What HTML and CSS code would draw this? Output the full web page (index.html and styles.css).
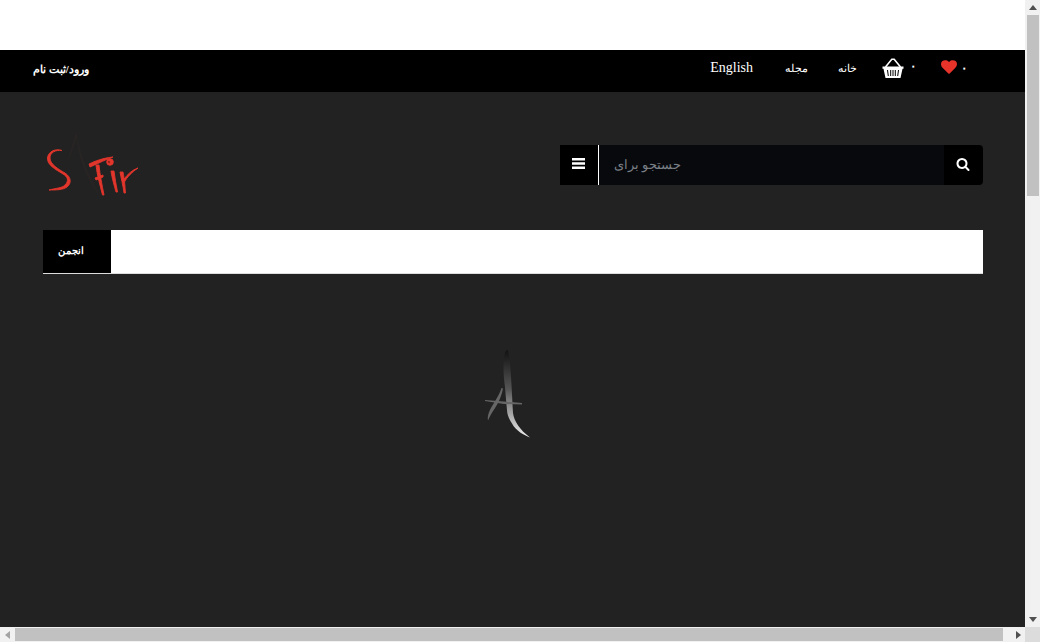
FILE: index.html
```html
<!DOCTYPE html>
<html lang="fa">
<head>
<meta charset="utf-8">
<title>Safir</title>
<link rel="stylesheet" href="styles.css">
</head>
<body>
<div class="window">
  <div class="page">
    <div class="top-strip"></div>
    <nav class="nav">
      <a class="login">ورود/ثبت نام</a>
      <div class="nav-right">
        <a class="lang">English</a>
        <a class="nav-link mag">مجله</a>
        <a class="nav-link home">خانه</a>
        <svg class="basket" viewBox="0 0 22 20">
          <path class="basket-handle" d="M3.500 9 9.800 1.300h2.400L18.500 9"/>
          <path class="basket-fill" d="M0.500 8.500h21v2.200h-1L18.500 20h-15L1.500 10.700h-1z"/>
          <path class="basket-bars" d="M5.500 12l.8 6M8.700 12v6M11 12v6M13.300 12v6M16.500 12l-.8 6"/>
        </svg>
        <span class="count count-basket">۰</span>
        <svg class="heart" viewBox="0 0 1792 1792"><path d="M896 1664q-26 0-44-18l-624-602q-10-8-27.500-26t-55.500-65.500-68-97.500-53.500-121-23.500-138q0-220 127-344t351-124q62 0 126.500 21.500t120 58 95.500 68.500 76 68q36-36 76-68t95.500-68.500 120-58 126.500-21.500q224 0 351 124t127 344q0 221-229 450l-623 600q-18 18-44 18z"/></svg>
        <span class="count">۰</span>
      </div>
    </nav>
    <main class="main">
      <header class="header">
        <svg class="logo" viewBox="0 0 100 80">
          <path class="logo-ghost" d="M33 6C29 20 27 30 22 40L23 40C28 31 31 22 33.500 13 35 30 43 55 55 68L56 68C45 50 37 28 33 6z"/>
          <path class="logo-ink" d="M19 25.500C12 24.500 7 28 7 33 7 39 15 44 22 48 28 52 29 58 24 62 20 65 13 65 6 65 14 63 19 63 22 60 26 56 25 52 20 49 12 44 4 40 4.500 33 5 27 12 23 19 25.500z"/>
          <path class="logo-ink" d="M46 39C52 36 60 33 70 32 64 34 56 38 47 42z"/>
          <path class="logo-ink" d="M53 40 56 40C57 50 59 60 61 70L59.500 70C57 60 54 50 53 40z"/>
          <path class="logo-ink" d="M52 53 60 50 60 52 53 55z"/>
          <circle class="logo-ink" cx="67" cy="37" r="3.300"/>
          <circle class="logo-spot" cx="66" cy="37" r="0.900"/>
          <path class="logo-ink" d="M68 46 71 46C72 53 73 60 74.500 67L73 67C71 60 69 53 68 46z"/>
          <path class="logo-ink" d="M77 47 80 47C80.500 50 81 52 81 54 85 49 89 45 95 43 89 47 84 52 81.500 57 82 60 82 64 82.500 68L81 68C80 60 78 53 77 47z"/>
        </svg>
        <div class="search">
          <div class="search-menu">
            <svg class="bars" viewBox="0 0 13 11"><path d="M0 0h13v2.400H0zM0 4.300h13v2.400H0zM0 8.600h13V11H0z"/></svg>
          </div>
          <div class="search-field">جستجو برای</div>
          <div class="search-btn">
            <svg class="magnifier" viewBox="0 0 1792 1792"><path d="M1216 832q0-185-131.500-316.500t-316.500-131.500-316.500 131.500-131.500 316.500 131.500 316.500 316.500 131.500 316.500-131.500 131.500-316.500zm512 832q0 52-38 90t-90 38q-54 0-90-38l-343-342q-179 124-399 124-143 0-273.500-55.500t-225-150-150-225-55.500-273.500 55.500-273.500 150-225 225-150 273.500-55.500 273.500 55.500 225 150 150 225 55.500 273.500q0 220-124 399l343 343q37 37 37 90z"/></svg>
          </div>
        </div>
      </header>
      <div class="menu-bar">
        <a class="menu-item">انجمن</a>
      </div>
      <div class="loader">
        <svg class="loader-mark" viewBox="0 0 50 90">
          <defs>
            <linearGradient id="steel" x1="0" y1="0" x2="0" y2="1">
              <stop offset="0" stop-color="#111"/>
              <stop offset="0.45" stop-color="#555"/>
              <stop offset="0.62" stop-color="#888"/>
              <stop offset="1" stop-color="#eee"/>
            </linearGradient>
          </defs>
          <path class="mark" d="M25 .5C27 2 28 12 28.500 21 29.500 33 30 45 31 64 32 72 38 81 48 88.500 42 86 34 82 30 74.500 27 70 25 65 25 61 24 50 23 38 23 38 21 25 21 10 23 3.500z"/>
          <path class="mark-side" d="M21 39.500C20 45 18 50 16 54 12 61 8 66 6 71.500 5 66 8 60 12 54 15 49 18 44 19.500 39z"/>
          <path class="mark-side" d="M3 51 40 54 40 55.500 22 55 3 52z"/>
        </svg>
      </div>
    </main>
  </div>
  <div class="vscroll">
    <span class="arrow arrow-up"></span>
    <div class="vtrack"><div class="vthumb"></div></div>
    <span class="arrow arrow-down"></span>
  </div>
  <div class="hscroll">
    <span class="arrow arrow-left"></span>
    <div class="htrack"><div class="hthumb"></div></div>
    <span class="arrow arrow-right"></span>
  </div>
  <div class="corner"></div>
</div>
</body>
</html>
```

FILE: styles.css
```css
* { box-sizing: border-box; }
html, body { margin: 0; height: 100%; overflow: hidden; }
body { font-family: "Liberation Serif", serif; background: #fff; }

.window {
  display: grid;
  grid-template-columns: 1025px 15px;
  grid-template-rows: 627px 15px;
  width: 1040px;
  height: 642px;
}
.page { display: flex; flex-direction: column; overflow: hidden; }
.top-strip { height: 50px; background: #fff; }

.nav {
  height: 42px;
  background: #000;
  color: #fff;
  display: flex;
  align-items: center;
  justify-content: space-between;
  padding: 0 58px 0 33px;
}
.login { font-size: 10.500px; font-weight: bold; padding-bottom: 5px; }
.nav-right { display: flex; align-items: center; padding-bottom: 6px; }
.lang { font-size: 14px; margin-right: 32px; }
.nav-link { font-size: 11px; }
.mag { margin-right: 30px; }
.home { margin-right: 25px; }
.basket { width: 22px; height: 20px; margin-bottom: 1px; }
.basket-handle { fill: none; stroke: #fff; stroke-width: 1.600; }
.basket-fill { fill: #fff; }
.basket-bars { fill: none; stroke: #000; stroke-width: 1; }
.count { font-size: 12px; font-weight: bold; }
.count-basket { margin: 0 25px 4px 6px; }
.heart { width: 16px; height: 16px; fill: #e8332a; margin: 0 4px 2px 0; }

.main { flex: 1; background: #222; padding: 0 42px 0 43px; }
.header {
  display: flex;
  justify-content: space-between;
  padding-top: 33px;
  height: 138px;
}
.logo { width: 100px; height: 80px; }
.logo-ghost { fill: #282424; }
.logo-ink { fill: #e2352b; stroke: #e2352b; stroke-width: 0.900; stroke-linejoin: round; }
.logo-spot { fill: #7a1c16; }

.search {
  width: 423px;
  height: 40px;
  margin-top: 20px;
  display: flex;
  border-radius: 0 4px 4px 0;
  overflow: hidden;
  background: #000;
}
.search-menu {
  width: 39px;
  display: flex;
  align-items: center;
  justify-content: center;
  border-right: 1px solid #fff;
  padding: 0 2px 3px 0;
}
.bars { width: 13px; height: 11px; fill: #fff; }
.search-field {
  flex: 1;
  background: #07090d;
  color: #7a7f85;
  font-size: 13px;
  line-height: 39px;
  padding-left: 15px;
}
.search-btn {
  width: 39px;
  display: flex;
  align-items: center;
  justify-content: center;
  padding: 0 2px 2px 0;
}
.magnifier { width: 14px; height: 14px; fill: #fff; }

.menu-bar {
  height: 44px;
  background: #fff;
  border-bottom: 1px solid #ddd;
  display: flex;
}
.menu-item {
  width: 68px;
  height: 43px;
  background: #000;
  color: #fff;
  font-size: 9.500px;
  font-weight: bold;
  line-height: 42px;
  padding-left: 15px;
}

.loader { display: flex; justify-content: center; padding-top: 75px; }
.loader-mark { width: 50px; height: 90px; margin-right: 12px; }
.mark { fill: url(#steel); }
.mark-side { fill: #666; }

.vscroll { background: #f1f1f1; display: flex; flex-direction: column; align-items: center; }
.hscroll { background: #f1f1f1; display: flex; align-items: center; }
.corner { background: #dcdcdc; }
.vtrack { flex: 1; width: 100%; padding: 5px 0 0 2px; }
.vthumb { width: 12px; height: 181px; background: #c1c1c1; }
.htrack { flex: 1; height: 100%; padding: 1px 0; }
.hthumb { width: 988px; height: 100%; background: #c1c1c1; }
.arrow { width: 0; height: 0; border: 4px solid transparent; flex: none; }
.arrow-up { border-top: 0; border-bottom: 5px solid #505050; margin-top: 5px; }
.arrow-down { border-bottom: 0; border-top: 5px solid #505050; margin-bottom: 5px; }
.arrow-left { border-left: 0; border-right: 5px solid #a3a3a3; margin: 0 5px; }
.arrow-right { border-right: 0; border-left: 5px solid #505050; margin: 0 4px 0 6px; }
```
